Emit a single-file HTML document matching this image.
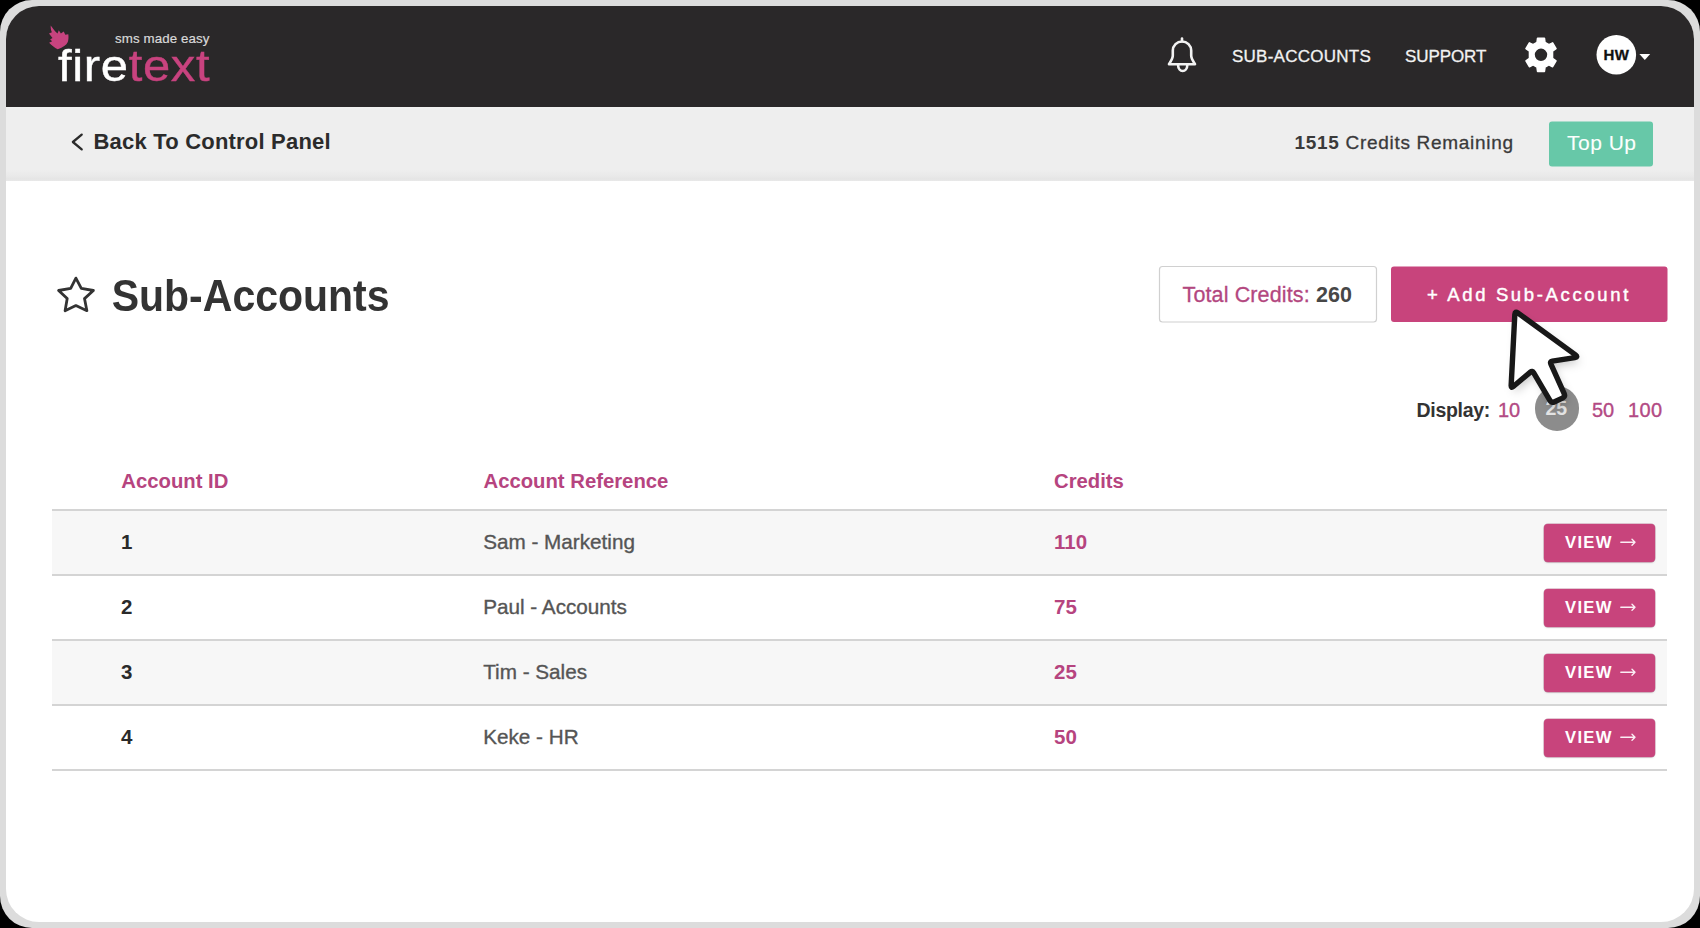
<!DOCTYPE html>
<html><head><meta charset="utf-8">
<style>
html,body{margin:0;padding:0;width:1700px;height:928px;overflow:hidden;background:#000;}
body{font-family:"Liberation Sans",sans-serif;position:relative;}
.frame{position:absolute;left:0;top:0;width:1700px;height:928px;border-radius:32px;background:#dcdcdc;}
.inner{position:absolute;left:6px;top:6px;width:1688px;height:916px;border-radius:33px;background:#fff;overflow:hidden;}
.pg{position:absolute;left:-6px;top:-6px;width:1700px;height:928px;}
.a{position:absolute;white-space:nowrap;line-height:1;}
.hdr{position:absolute;left:0;top:0;width:1700px;height:107px;background:#2a2829;}
.strip{position:absolute;left:0;top:107px;width:1700px;height:74px;background:linear-gradient(#f2f2f2 0px,#eeeeee 3px,#eeeeee 63px,#e9e9e9 69px,#e5e5e5 72px,#e8e8e8 74px);}
.pink{color:#b6447f;}
.ln{position:absolute;left:52px;width:1615px;height:2px;background:#d4d4d4;}
.vbtn{position:absolute;left:1544px;width:111px;height:38px;background:#c8447c;border-radius:4px;box-shadow:0 0 0 0.5px rgba(150,40,90,.5),0 1px 2px rgba(0,0,0,.12);}
.vt{position:absolute;left:1565px;margin-top:1px;font-size:16.7px;font-weight:bold;color:#fff;letter-spacing:1.3px;line-height:1;}
.num{position:absolute;left:121px;font-size:20.5px;font-weight:bold;color:#2a2a2a;line-height:1;}
.ref{position:absolute;left:483.2px;font-size:20.7px;color:#555;line-height:1;white-space:nowrap;-webkit-text-stroke:0.35px #555;}
.cr{position:absolute;left:1054px;font-size:20.5px;font-weight:bold;line-height:1;}
</style></head>
<body>
<div class="frame"></div>
<div class="inner"><div class="pg">
  <!-- header -->
  <div class="hdr"></div>
  <svg class="a" style="left:0;top:0" width="1700" height="107" viewBox="0 0 1700 107">
    <!-- flame -->
    <path d="M50.7 25.4 C52.5 28 54.2 30.2 55.6 31.8 L57.5 33.5 L58.8 30.2 L60.9 33.4 L63.7 31.5 L65.3 34.8 L68.3 34.2 C68.7 37 68.5 39.8 67.8 42 C66.5 45 63 47.5 57.8 49.3 C55 47.8 52.5 46 49.1 42.7 L52.2 41.3 L50.1 39.6 L52.5 37.9 L49 33.4 L51.9 32.3 C50.9 30 50.6 27.8 50.7 25.4 Z" fill="#c8437f"/>
    <!-- bell -->
    <g fill="none" stroke="#f2f2f2" stroke-width="2.6" stroke-linejoin="round" stroke-linecap="round">
      <path d="M1182 38.6 V41.2"/>
      <path d="M1172.8 50.6 A9.2 9.2 0 0 1 1191.2 50.6 V55.5 C1191.2 58.5 1193 61 1195 64.2 H1169 C1171 61 1172.8 58.5 1172.8 55.5 Z"/>
      <path d="M1178.1 65 C1178.1 73 1187.3 73 1187.3 65"/>
    </g>
    <!-- gear -->
    <g transform="translate(1541 54.8)">
      <path fill="#fff" stroke="#fff" stroke-width="1.6" stroke-linejoin="round" fill-rule="evenodd" d="M-3.4 -16.6 H3.4 L4 -12.3 L7.9 -10 L11.6 -11.9 L15 -6.1 L11.5 -3.6 V3.6 L15 6.1 L11.6 11.9 L7.9 10 L4 12.3 L3.4 16.6 H-3.4 L-4 12.3 L-7.9 10 L-11.6 11.9 L-15 6.1 L-11.5 3.6 V-3.6 L-15 -6.1 L-11.6 -11.9 L-7.9 -10 L-4 -12.3 Z M0 -7 A7 7 0 1 0 0 7 A7 7 0 1 0 0 -7 Z"/>
    </g>
    <circle cx="1616.3" cy="54.8" r="19.8" fill="#fff"/>
    <path d="M1639.4 54 H1650.2 L1644.8 60 Z" fill="#fff"/>
  </svg>
  <div class="a" style="left:115px;top:32px;font-size:13.3px;color:#d9d9d9;letter-spacing:0.1px;-webkit-text-stroke:0.2px #d9d9d9">sms made easy</div>
  <div class="a" style="left:57.5px;top:43.5px;font-size:43.7px;color:#fff;letter-spacing:0.6px;transform:scaleX(1.12);transform-origin:0 0;-webkit-text-stroke:0.4px #fff">fire<span style="color:#c8437f;-webkit-text-stroke:0.4px #c8437f">text</span></div>
  <div class="a" style="left:1232px;top:48px;font-size:17px;color:#f2f2f2;letter-spacing:0.25px;-webkit-text-stroke:0.3px #f2f2f2">SUB-ACCOUNTS</div>
  <div class="a" style="left:1405px;top:48px;font-size:17px;color:#f2f2f2;letter-spacing:-0.1px;-webkit-text-stroke:0.3px #f2f2f2">SUPPORT</div>
  <div class="a" style="left:1598.3px;top:47px;width:36px;text-align:center;font-size:15px;font-weight:bold;color:#111;letter-spacing:0.3px;-webkit-text-stroke:0.3px #111">HW</div>

  <!-- strip -->
  <div class="strip"></div>
  <svg class="a" style="left:0;top:107px" width="1700" height="74" viewBox="0 107 1700 74">
    <path d="M81.7 134.6 L72.9 142 L81.7 149.4" fill="none" stroke="#2b2b2b" stroke-width="2.3" stroke-linejoin="round" stroke-linecap="round"/>
    <rect x="1549" y="121.5" width="104" height="45" rx="3" fill="#67c8a8"/>
  </svg>
  <div class="a" style="left:93.5px;top:130.5px;font-size:22px;font-weight:bold;color:#2b2b2b;letter-spacing:0.2px">Back To Control Panel</div>
  <div class="a" style="left:1294.5px;top:133px;font-size:19px;color:#3a3a3a;letter-spacing:0.7px;-webkit-text-stroke:0.3px #3a3a3a"><b style="-webkit-text-stroke:0">1515</b> Credits Remaining</div>
  <div class="a" style="left:1567px;top:131.5px;font-size:21px;color:#fbfffd;letter-spacing:0.5px;-webkit-text-stroke:0.1px #fff">Top Up</div>

  <!-- title -->
  <svg class="a" style="left:0;top:260px" width="1700" height="70" viewBox="0 260 1700 70">
    <path d="M75.9 278.1 L81.3 288.3 L93.4 290.5 L84.5 298.6 L86.9 310.7 L75.9 305.6 L65.1 310.7 L67.2 298.6 L58.6 290.5 L70.7 288.3 Z" fill="none" stroke="#333" stroke-width="2.8" stroke-linejoin="round"/>
    <rect x="1159.5" y="266.5" width="217" height="55.5" rx="3" fill="#fff" stroke="#d0d0d0" stroke-width="1.2"/>
    <rect x="1391" y="266.5" width="276.5" height="55.5" rx="3" fill="#c8447c"/>
  </svg>
  <div class="a" style="left:111.7px;top:274.5px;font-size:41px;font-weight:bold;color:#333;transform:scaleY(1.06);transform-origin:0 0">Sub-Accounts</div>
  <div class="a" style="left:1182.5px;top:284.5px;font-size:21.5px;color:#b3477f;letter-spacing:0.13px;-webkit-text-stroke:0.3px #b3477f">Total Credits: <b style="color:#474747;-webkit-text-stroke:0">260</b></div>
  <div class="a" style="left:1427px;top:286px;font-size:18.5px;color:#fff;letter-spacing:2.65px;-webkit-text-stroke:0.45px #fff">+ Add Sub-Account</div>

  <!-- display -->
  <div class="a" style="left:1416.5px;top:401px;font-size:19.5px;font-weight:bold;color:#333;letter-spacing:-0.3px">Display:</div>
  <div class="a" style="left:1498px;top:399.5px;font-size:20px;color:#b34a84;-webkit-text-stroke:0.35px #b34a84">10</div>
  <div class="a" style="left:1534.7px;top:386.1px;width:44.8px;height:44.8px;border-radius:50%;background:#8c8c8c;"></div>
  <div class="a" style="left:1545.5px;top:399.2px;font-size:19.5px;font-weight:bold;color:#e4e4e4">25</div>
  <div class="a" style="left:1592px;top:399.5px;font-size:20px;color:#b34a84;-webkit-text-stroke:0.35px #b34a84">50</div>
  <div class="a" style="left:1628px;top:399.5px;font-size:20px;color:#b34a84;letter-spacing:0.4px;-webkit-text-stroke:0.35px #b34a84">100</div>

  <!-- table header -->
  <div class="a pink" style="left:121.3px;top:471px;font-size:20.3px;font-weight:bold;">Account ID</div>
  <div class="a pink" style="left:483.5px;top:471px;font-size:20.3px;font-weight:bold;">Account Reference</div>
  <div class="a pink" style="left:1054px;top:471px;font-size:20.3px;font-weight:bold;">Credits</div>
  <div class="a" style="left:52px;top:511px;width:1615px;height:63px;background:#f7f7f7"></div>
  <div class="a" style="left:52px;top:641px;width:1615px;height:63px;background:#f7f7f7"></div>
  <div class="ln" style="top:509.2px"></div>
  <div class="ln" style="top:574.2px"></div>
  <div class="ln" style="top:639.2px"></div>
  <div class="ln" style="top:704.2px"></div>
  <div class="ln" style="top:769.2px"></div>

  <div class="num" style="top:532px">1</div>
  <div class="ref" style="top:532px">Sam - Marketing</div>
  <div class="cr pink" style="top:532px">110</div>
  <div class="vbtn" style="top:523.5px"></div>
  <div class="vt" style="top:534px">VIEW</div>

  <div class="num" style="top:597px">2</div>
  <div class="ref" style="top:597px">Paul - Accounts</div>
  <div class="cr pink" style="top:597px">75</div>
  <div class="vbtn" style="top:588.5px"></div>
  <div class="vt" style="top:599px">VIEW</div>

  <div class="num" style="top:662px">3</div>
  <div class="ref" style="top:662px">Tim - Sales</div>
  <div class="cr pink" style="top:662px">25</div>
  <div class="vbtn" style="top:653.5px"></div>
  <div class="vt" style="top:664px">VIEW</div>

  <div class="num" style="top:727px">4</div>
  <div class="ref" style="top:727px">Keke - HR</div>
  <div class="cr pink" style="top:727px">50</div>
  <div class="vbtn" style="top:718.5px"></div>
  <div class="vt" style="top:729px">VIEW</div>

  <svg class="a" style="left:0;top:500px" width="1700" height="280" viewBox="0 500 1700 280">
    <g fill="none" stroke="#fbeef4" stroke-width="1.4" stroke-linecap="round" stroke-linejoin="round">
      <path d="M1620.8 542.2 H1635 M1632 539.2 L1635 542.2 L1632 545.2"/>
      <path d="M1620.8 607.2 H1635 M1632 604.2 L1635 607.2 L1632 610.2"/>
      <path d="M1620.8 672.2 H1635 M1632 669.2 L1635 672.2 L1632 675.2"/>
      <path d="M1620.8 737.2 H1635 M1632 734.2 L1635 737.2 L1632 740.2"/>
    </g>
  </svg>

  <!-- cursor -->
  <svg class="a" style="left:0;top:280px" width="1700" height="160" viewBox="0 280 1700 160">
    <defs><filter id="sh" x="-50%" y="-50%" width="200%" height="200%"><feGaussianBlur stdDeviation="5"/></filter></defs>
    <path d="M1514.82 314.30 L1511.15 385.50 Q1511.00 388.50 1513.29 386.56 L1530.39 372.11 Q1532.30 370.50 1533.57 372.66 L1549.73 400.18 Q1551.50 403.20 1554.67 401.71 L1562.33 398.09 Q1565.50 396.60 1564.07 393.41 L1550.82 363.78 Q1549.80 361.50 1552.27 361.11 L1574.84 357.55 Q1578.30 357.00 1575.47 354.94 L1517.83 312.86 Q1515.00 310.80 1514.82 314.30 Z" fill="rgba(0,0,0,.22)" filter="url(#sh)" transform="translate(3,5)"/>
    <path d="M1514.82 314.30 L1511.15 385.50 Q1511.00 388.50 1513.29 386.56 L1530.39 372.11 Q1532.30 370.50 1533.57 372.66 L1549.73 400.18 Q1551.50 403.20 1554.67 401.71 L1562.33 398.09 Q1565.50 396.60 1564.07 393.41 L1550.82 363.78 Q1549.80 361.50 1552.27 361.11 L1574.84 357.55 Q1578.30 357.00 1575.47 354.94 L1517.83 312.86 Q1515.00 310.80 1514.82 314.30 Z" fill="#fff" stroke="#181818" stroke-width="5.4" stroke-linejoin="round"/>
  </svg>
</div></div>
</body></html>
